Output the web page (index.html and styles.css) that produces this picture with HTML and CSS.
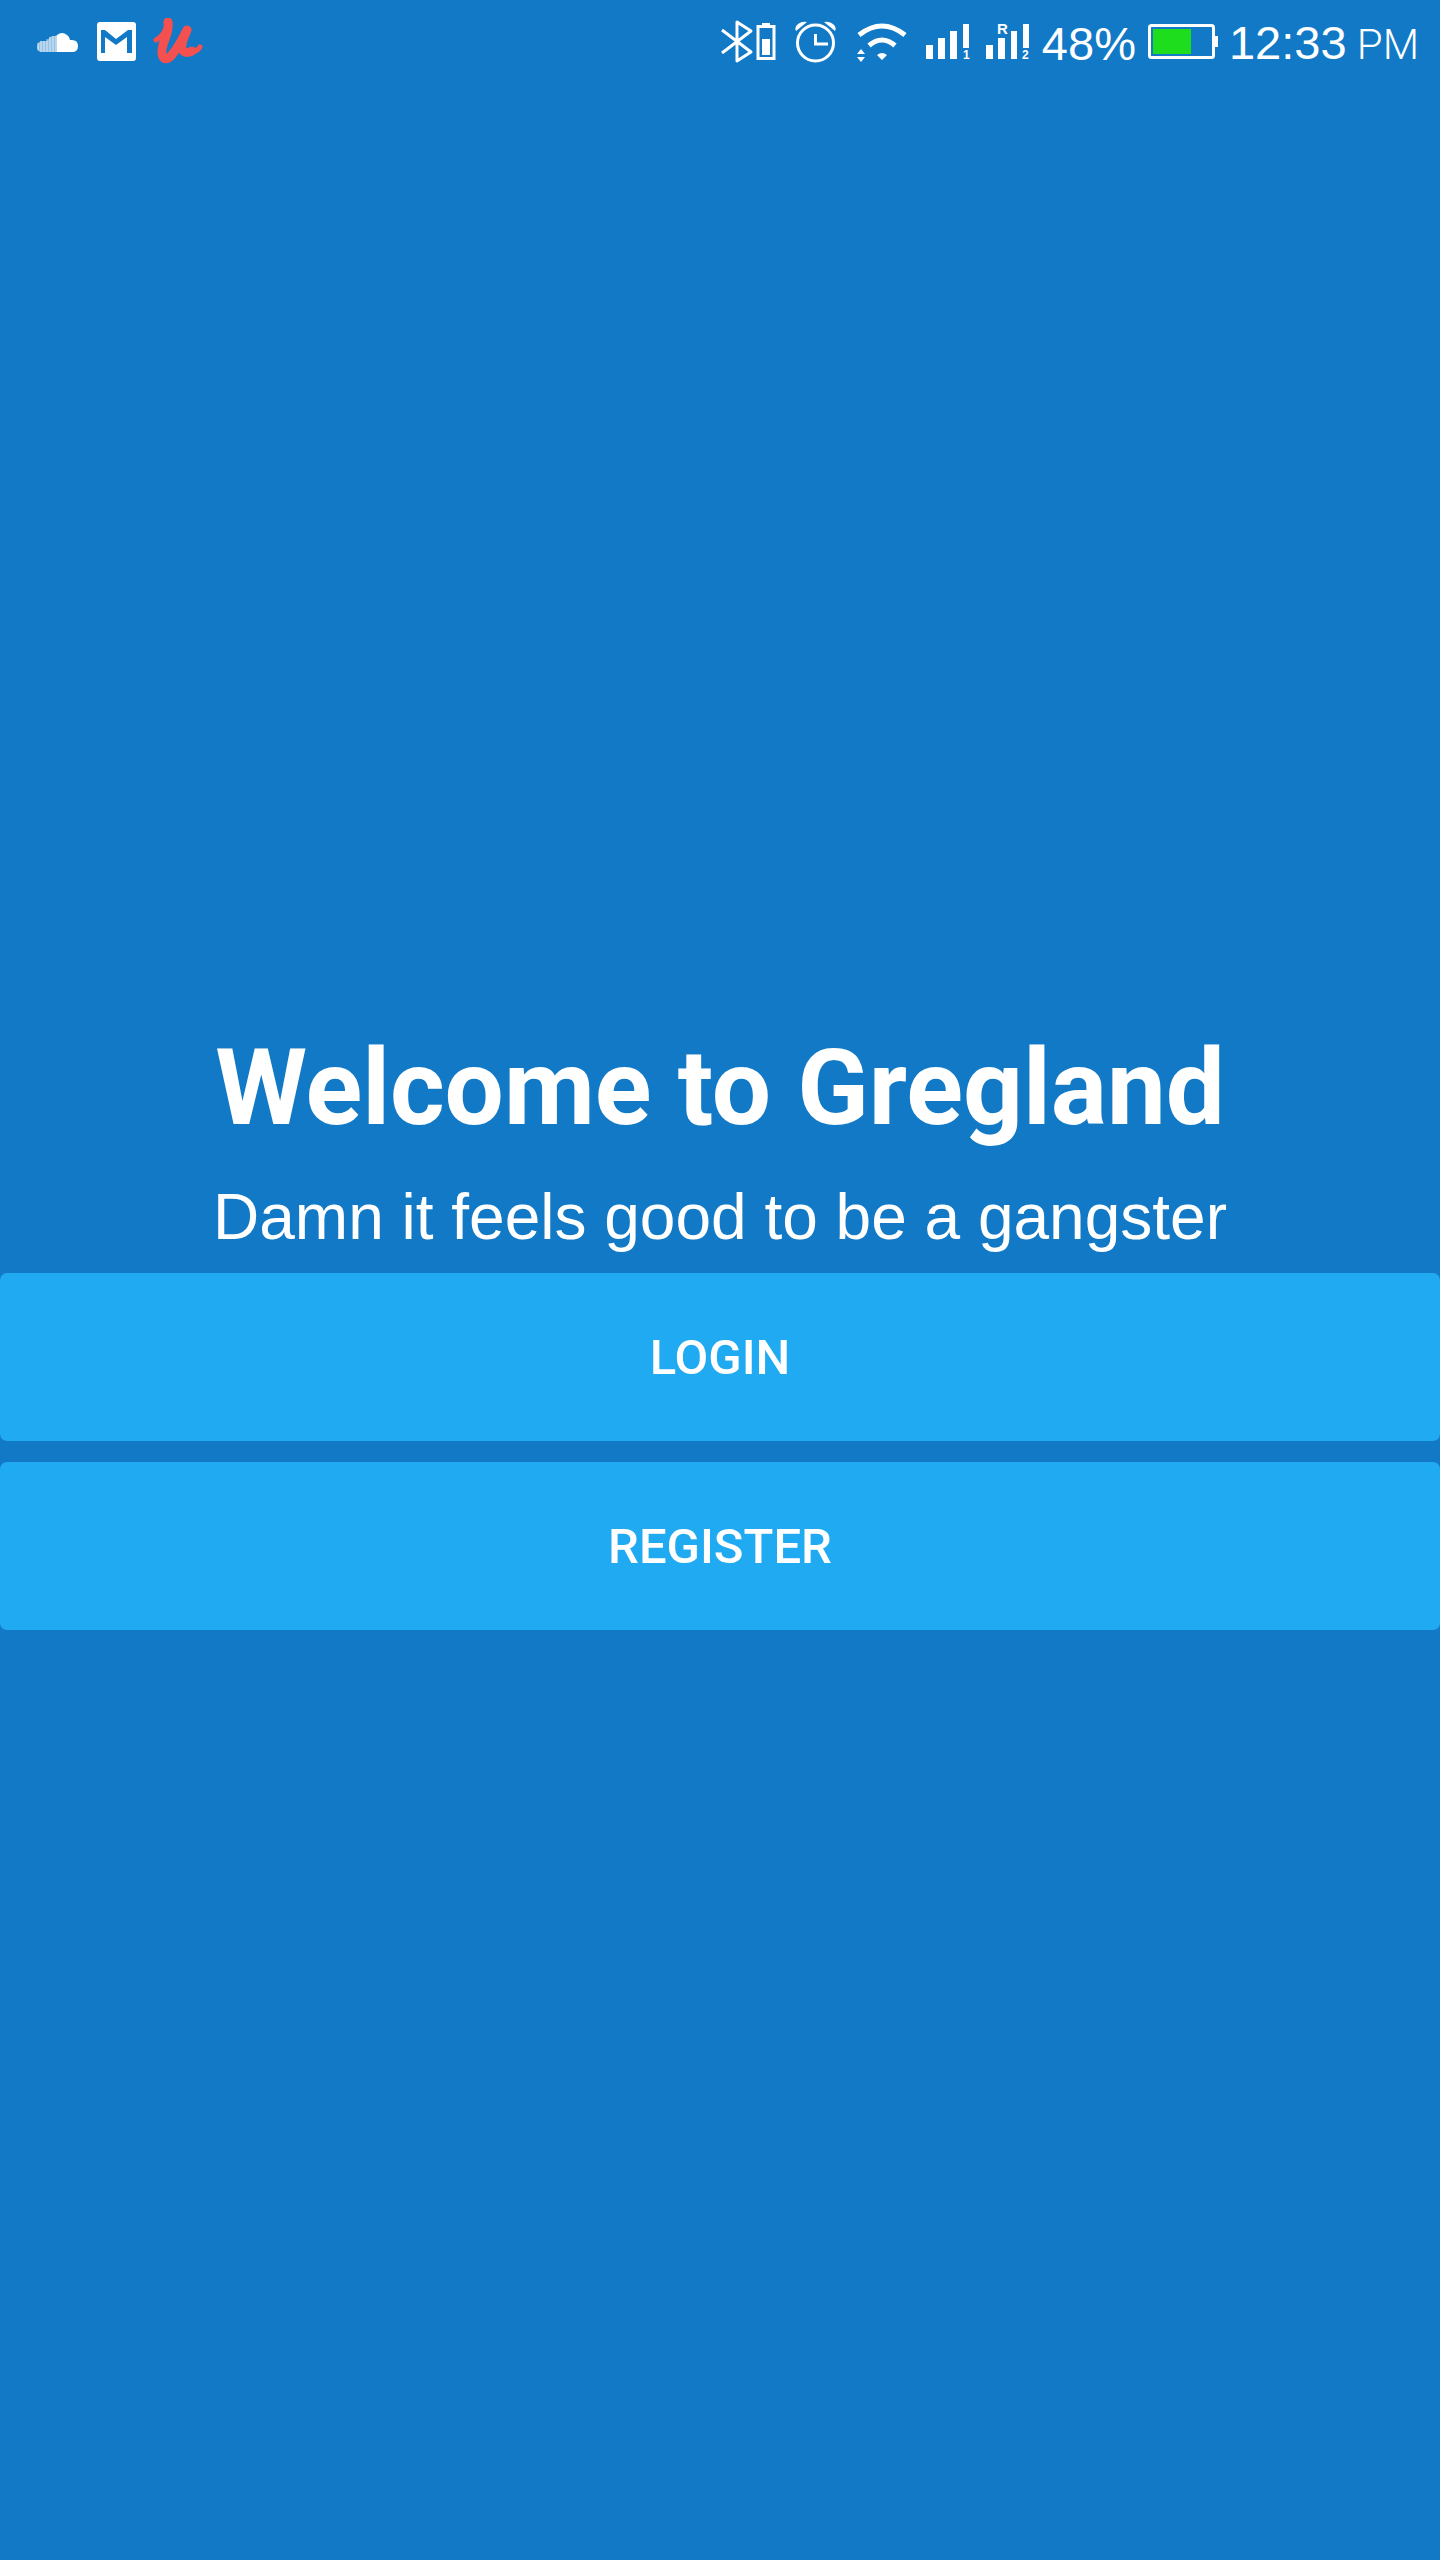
FILE: index.html
```html
<!DOCTYPE html>
<html lang="en">
<head>
<meta charset="utf-8">
<meta name="viewport" content="width=device-width, initial-scale=1">
<title>Gregland</title>
<link rel="stylesheet" href="styles.css">
</head>
<body>
<div class="screen">
  <header class="status">
    <div class="notifications">
      <svg class="icon" width="45" height="48" viewBox="36 18 45 48" role="img" aria-label="SoundCloud">
        <path d="M57 52V35q5-4 10 0q3 2 3 5q8-1 8 6q0 6-6 6z" fill="#fff"/>
        <path d="M57 52V35l-2 1-2 0-3 1-3 4-3 0-3 0-3 2-1 4 1 4 3 1z" fill="#fff" opacity=".55"/>
        <path d="M38 43v7M41 41v11M44 41v11M47 39v13M50 37v15M53 36v16M56 36v16" stroke="#fff" opacity=".7"/>
      </svg>
      <svg class="icon" width="40" height="48" viewBox="97 18 40 48" role="img" aria-label="Gmail">
        <path fill="#fff" fill-rule="evenodd" d="M100 22h33q3 0 3 3v33q0 3-3 3h-33q-3 0-3-3V25q0-3 3-3zM101 30v23h4V37l11 8 11-8v16h5V30h-4l-12 9-11-9z"/>
      </svg>
      <svg class="icon" width="50" height="48" viewBox="152 18 50 48" role="img" aria-label="Udemy">
        <path fill="none" stroke="#f4504f" stroke-linecap="round" stroke-linejoin="round" d="M155 40q9-4 12-19" stroke-width="5"/>
        <path fill="none" stroke="#f4504f" stroke-width="9" stroke-linecap="round" stroke-linejoin="round" d="M167 22q1 7-3 17q-5 13-2 18q3 4 8-1q7-8 16-26q-6 13-5 18q2 7 10 3"/>
        <path fill="none" stroke="#f4504f" stroke-width="5" stroke-linecap="round" d="M188 53q8-1 11-6"/>
      </svg>
    </div>
    <div class="system">
      <svg class="icon" width="58" height="48" viewBox="721 18 58 48" role="img" aria-label="Bluetooth">
        <path fill="none" stroke="#fff" stroke-width="3" stroke-linejoin="round" d="M722 30l29 22-14 9V22l14 9-29 22"/>
        <path fill="none" stroke="#fff" stroke-width="3" d="M758 26.500h16v32h-16z"/>
        <path fill="#fff" d="M762 23h8v3h-8zM762 39h8v16h-8z"/>
      </svg>
      <svg class="icon" width="46" height="48" viewBox="795 18 46 48" role="img" aria-label="Alarm">
        <circle cx="815.500" cy="43" r="18" fill="none" stroke="#fff" stroke-width="3"/>
        <path fill="none" stroke="#fff" stroke-width="3" d="M815.500 34v10H828"/>
        <path fill="#fff" d="M796 31q-2-4 2-7t9-2zM835 31q2-4-2-7t-9-2z"/>
      </svg>
      <svg class="icon" width="53" height="48" viewBox="857 18 53 48" role="img" aria-label="Wi-Fi">
        <path fill="none" stroke="#fff" stroke-width="5" d="M859 35q23-18 46 0M869 45.500q13-11 26 0"/>
        <path fill="#fff" d="M877 55q5-4 10 0l-5 5zM857 54l4-5 4 5zM857 57h8l-4 5z"/>
      </svg>
      <svg class="icon" width="44" height="48" viewBox="926 18 44 48" role="img" aria-label="SIM 1 signal">
        <path fill="#fff" d="M926 45h7v14h-7zM938 38h7v21h-7zM950 31h7v28h-7zM963 24h6v24h-6z"/>
        <text x="963" y="59" class="sim">1</text>
      </svg>
      <svg class="icon" width="44" height="48" viewBox="985 18 44 48" role="img" aria-label="SIM 2 signal, roaming">
        <path fill="#fff" d="M985 45h7v14h-7zM997 38h7v21h-7zM1010 31h6v28h-6zM1022 24h6v24h-6z"/>
        <text x="996" y="34" class="roaming">R</text>
        <text x="1021" y="59" class="sim">2</text>
      </svg>
      <span class="percent">48%</span>
      <svg class="icon" width="70" height="48" viewBox="1147 18 70 48" role="img" aria-label="Battery">
        <rect x="1148.500" y="25.500" width="64" height="32" rx="2" fill="none" stroke="#fff" stroke-width="3"/>
        <path fill="#fff" d="M1213 36h4v11h-4z"/>
        <path fill="#1ddd1d" d="M1152 29h38v25h-38z"/>
      </svg>
      <time class="clock" datetime="12:33">12:33<span class="meridiem"> PM</span></time>
    </div>
  </header>
  <main class="welcome">
    <h1 class="title">Welcome to Gregland</h1>
    <p class="tagline">Damn it feels good to be a gangster</p>
    <div class="actions">
      <button class="action" type="button">LOGIN</button>
      <button class="action" type="button">REGISTER</button>
    </div>
  </main>
</div>
</body>
</html>
```
FILE: styles.css
```css
body {
  margin: 0;
  background: #1179c6;
  color: #fff;
  font-family: "Liberation Sans", Arial, sans-serif;
}

.screen {
  display: flex;
  flex-direction: column;
  min-height: 100vh;
}

.status {
  display: flex;
  justify-content: space-between;
  align-items: center;
  box-sizing: border-box;
  height: 84px;
  padding: 0 21px 0 36px;
  font-size: 47px;
  line-height: 48px;
  white-space: nowrap;
}

.notifications,
.system {
  display: flex;
  align-items: center;
  gap: 16px;
}

.icon {
  display: block;
  flex: none;
}

.percent,
.clock {
  padding-top: 4px;
}

.percent {
  margin: 0 -4px;
}

.clock {
  margin-left: -5px;
}

.meridiem {
  font-family: Roboto, sans-serif;
  font-size: 42px;
  font-weight: 300;
}

.sim {
  fill: #fff;
  font: bold 12px "Liberation Sans", sans-serif;
}

.roaming {
  fill: #fff;
  font: bold 15px "Liberation Sans", sans-serif;
}

.welcome {
  flex: 1;
  display: flex;
  flex-direction: column;
  justify-content: center;
  padding-top: 12px;
}

.title {
  margin: 0 0 30px;
  font: bold 105px/124px Roboto, sans-serif;
  text-align: center;
}

.tagline {
  margin: 0 0 20px;
  font-size: 64px;
  line-height: 72px;
  text-align: center;
}

.actions {
  display: flex;
  flex-direction: column;
  gap: 21px;
}

.action {
  height: 168px;
  padding: 3px 24px 0;
  border: 0;
  border-radius: 7px;
  background: #1faaf1;
  color: #fff;
  font: 500 49px/60px Roboto, sans-serif;
  cursor: pointer;
}
```
